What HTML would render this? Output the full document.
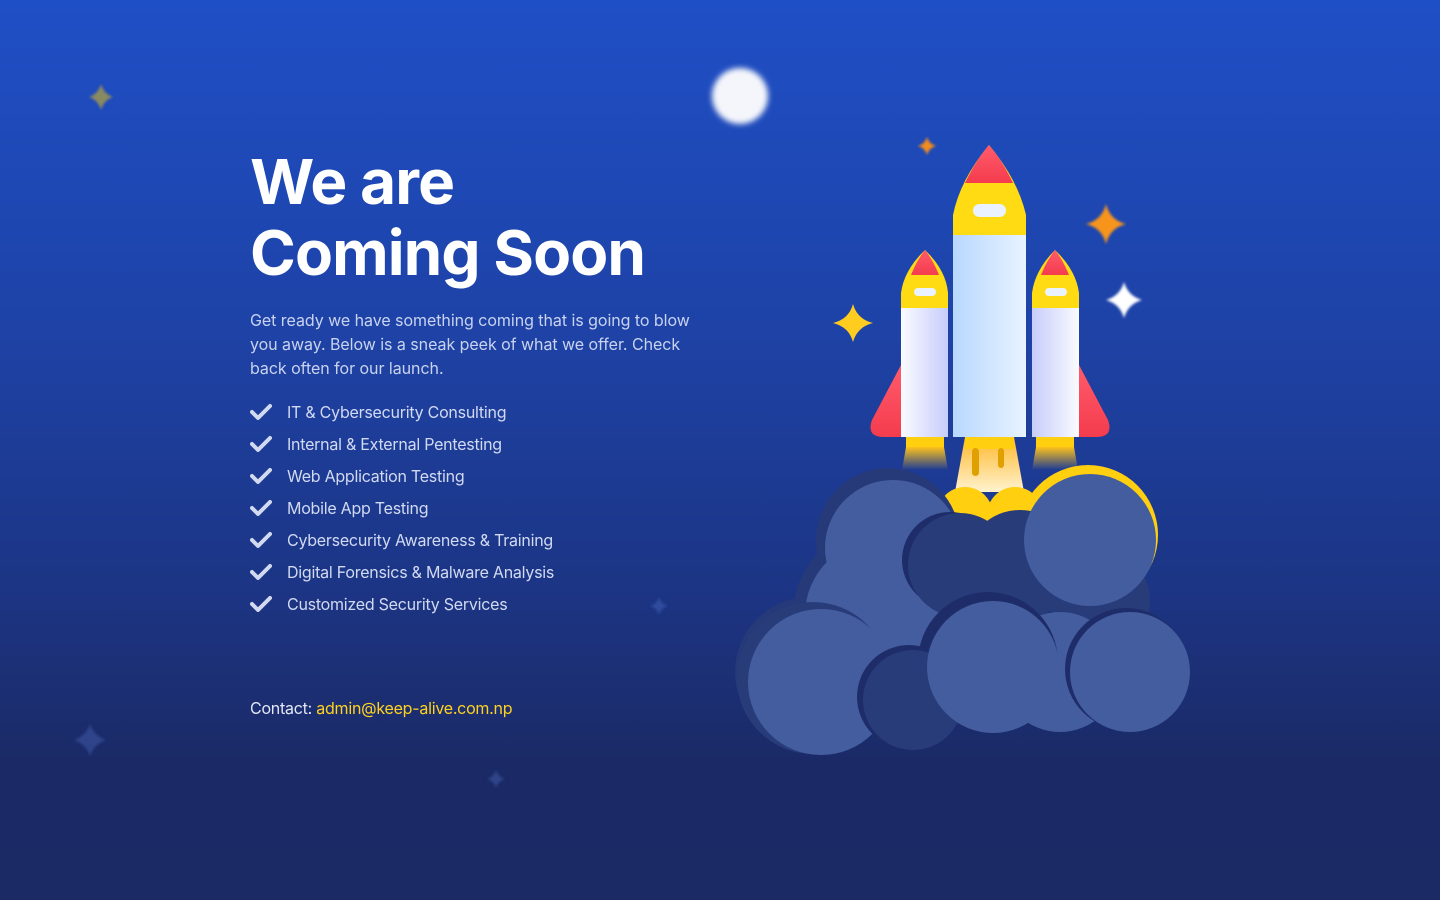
<!DOCTYPE html>
<html><head><meta charset="utf-8"><style>
html,body{margin:0;padding:0}
body{width:1440px;height:900px;overflow:hidden;position:relative;font-family:"Inter","Liberation Sans",sans-serif;background:linear-gradient(180deg,#1f4fc6 0%,#1e43a8 35%,#1c3585 65%,#1b2a66 85%,#1b2965 100%)}
h1{position:absolute;left:250px;top:146px;margin:0;color:#fff;font-size:62px;line-height:71px;font-weight:700;letter-spacing:-0.9px}
p{position:absolute;left:250px;top:308px;margin:0;width:460px;color:#c9d3ef;font-size:16px;line-height:24px;letter-spacing:-0.05px}
ul{position:absolute;left:250px;top:399px;margin:0;padding:0;list-style:none}
li{height:32px;line-height:26px;color:#d2daf2;font-size:16px;padding-left:37px;position:relative;letter-spacing:-0.25px}
li svg{position:absolute;left:0;top:4px}
.c{position:absolute;left:250px;top:698px;color:#e3e8f7;font-size:16px;letter-spacing:-0.25px}
.c span{color:#ffd21f}
svg.art{position:absolute;left:0;top:0}
</style></head><body>
<svg class="art" width="1440" height="900" viewBox="0 0 1440 900">
<defs>
<filter id="b"><feGaussianBlur stdDeviation="3"/></filter>
<filter id="b2"><feGaussianBlur stdDeviation="1.2"/></filter>
<linearGradient id="cb" x1="0" x2="1"><stop offset="0" stop-color="#b8d8ff"/><stop offset="1" stop-color="#e8f3ff"/></linearGradient>
<linearGradient id="sl" x1="0" x2="1"><stop offset="0" stop-color="#fafbff"/><stop offset="1" stop-color="#c7cdfb"/></linearGradient>
<linearGradient id="sr" x1="1" x2="0"><stop offset="0" stop-color="#fafbff"/><stop offset="1" stop-color="#c7cdfb"/></linearGradient>
<linearGradient id="fl" x1="0" y1="0" x2="0" y2="1"><stop offset="0" stop-color="#ffc21a"/><stop offset="1" stop-color="#ffc21a" stop-opacity="0"/></linearGradient>
<linearGradient id="fc" x1="0" y1="0" x2="0" y2="1"><stop offset="0" stop-color="#ffb72a"/><stop offset="1" stop-color="#fff3d0"/></linearGradient>
<linearGradient id="red" x1="0" y1="0" x2="0" y2="1"><stop offset="0" stop-color="#ff5b6b"/><stop offset="1" stop-color="#f43c4e"/></linearGradient>
</defs>
<circle cx="740" cy="96" r="28" fill="#f4f6fb" filter="url(#b)"/>
<g filter="url(#b2)">
<path d="M101 84 Q104 94 113 97 Q104 100 101 110 Q98 100 89 97 Q98 94 101 84Z" fill="#a59a4a" opacity=".8"/>
<path d="M90 724 Q94 736 106 740 Q94 744 90 756 Q86 744 74 740 Q86 736 90 724Z" fill="#3a55a0" opacity=".6"/>
<path d="M496 770 Q498 777 505 779 Q498 781 496 788 Q494 781 487 779 Q494 777 496 770Z" fill="#3a55a0" opacity=".6"/>
<path d="M659 597 Q661 604 668 606 Q661 608 659 615 Q657 608 650 606 Q657 604 659 597Z" fill="#3a5cb0" opacity=".6"/>
<path d="M927 137 Q929 144 936 146 Q929 148 927 155 Q925 148 918 146 Q925 144 927 137Z" fill="#f28c1c"/>
<path d="M1106 204 Q1110 220 1126 224 Q1110 228 1106 244 Q1102 228 1086 224 Q1102 220 1106 204Z" fill="#f7941d"/>
<path d="M1124 282 Q1128 296 1142 300 Q1128 304 1124 318 Q1120 304 1106 300 Q1120 296 1124 282Z" fill="#fff"/>
</g>
<path d="M853 304 Q857 319 873 323 Q857 327 853 342 Q849 327 833 323 Q849 319 853 304Z" fill="#ffcc1f"/>
<rect x="906" y="437" width="38" height="10" fill="#ffcf10"/>
<path d="M906 447 L944 447 L948 470 L902 470Z" fill="url(#fl)"/>
<rect x="1036" y="437" width="38" height="10" fill="#ffcf10"/>
<path d="M1036 447 L1074 447 L1078 470 L1032 470Z" fill="url(#fl)"/>
<path d="M965 437 L1014 437 L1024 492 L955 492Z" fill="url(#fc)"/>
<rect x="965" y="437" width="49" height="12" fill="#ffcf10"/>
<rect x="972" y="448" width="7" height="28" rx="3.5" fill="#e0a000"/>
<rect x="998" y="448" width="6" height="20" rx="3" fill="#e0a000"/>
<path d="M901 365 L872 420 Q866 437 884 437 L901 437Z" fill="url(#red)"/>
<path d="M1079 365 L1108 420 Q1114 437 1096 437 L1079 437Z" fill="url(#red)"/>
<path d="M901 308 L901 293 Q904 270 925 250 Q946 270 948 293 L948 308Z" fill="#ffdb14"/>
<path d="M911 275 Q917 260 925 250 Q933 260 939 275Z" fill="url(#red)"/>
<rect x="901" y="308" width="47" height="129" fill="url(#sl)"/>
<rect x="914" y="288" width="22" height="8" rx="4" fill="#eaf2ff"/>
<path d="M1032 308 L1032 293 Q1035 270 1055 250 Q1076 270 1079 293 L1079 308Z" fill="#ffdb14"/>
<path d="M1041 275 Q1047 260 1055 250 Q1063 260 1069 275Z" fill="url(#red)"/>
<rect x="1032" y="308" width="47" height="129" fill="url(#sr)"/>
<rect x="1045" y="288" width="22" height="8" rx="4" fill="#eaf2ff"/>
<path d="M953 235 L953 215 Q960 180 989 145 Q1018 180 1026 215 L1026 235Z" fill="#ffdb14"/>
<path d="M965 183 Q976 160 989 145 Q1002 160 1013 183Z" fill="url(#red)"/>
<rect x="953" y="235" width="73" height="202" fill="url(#cb)"/>
<rect x="973" y="204" width="33" height="13" rx="6.5" fill="#eaf2ff"/>
<circle cx="1088" cy="535" r="70" fill="#ffcf10"/>
<circle cx="965" cy="515" r="28" fill="#ffcf10"/>
<circle cx="1015" cy="515" r="28" fill="#ffcf10"/>
<g fill="#263a7a">
<circle cx="888" cy="540" r="72"/>
<circle cx="872" cy="610" r="78"/>
<circle cx="810" cy="672" r="75"/>
</g>
<g fill="#445d9e">
<circle cx="893" cy="548" r="68"/>
<circle cx="880" cy="615" r="75"/>
</g>
<circle cx="950" cy="560" r="48" fill="#1e2d6a"/>
<g fill="#283c7a">
<circle cx="960" cy="565" r="52"/>
<circle cx="1020" cy="565" r="55"/>
<circle cx="1100" cy="600" r="50"/>
</g>
<circle cx="1090" cy="540" r="66" fill="#445d9e"/>
<circle cx="1060" cy="672" r="60" fill="#445d9e"/>
<circle cx="988" cy="662" r="70" fill="#1e2d6a"/>
<circle cx="813" cy="678" r="76" fill="#283c7a"/>
<circle cx="821" cy="682" r="73" fill="#445d9e"/>
<circle cx="909" cy="697" r="52" fill="#1e2d6a"/>
<circle cx="913" cy="700" r="50" fill="#283c7a"/>
<circle cx="993" cy="667" r="66" fill="#445d9e"/>
<circle cx="1126" cy="669" r="61" fill="#1e2d6a"/>
<circle cx="1130" cy="672" r="60" fill="#445d9e"/>
</svg>
<h1>We are<br>Coming Soon</h1>
<p>Get ready we have something coming that is going to blow you away. Below is a sneak peek of what we offer. Check back often for our launch.</p>
<ul>
<li><svg width="22" height="18" viewBox="0 0 22 18"><path d="M2 9 L8 15 L20 3" fill="none" stroke="#d2daf2" stroke-width="4" stroke-linecap="round" stroke-linejoin="round"/></svg>IT &amp; Cybersecurity Consulting</li>
<li><svg width="22" height="18" viewBox="0 0 22 18"><path d="M2 9 L8 15 L20 3" fill="none" stroke="#d2daf2" stroke-width="4" stroke-linecap="round" stroke-linejoin="round"/></svg>Internal &amp; External Pentesting</li>
<li><svg width="22" height="18" viewBox="0 0 22 18"><path d="M2 9 L8 15 L20 3" fill="none" stroke="#d2daf2" stroke-width="4" stroke-linecap="round" stroke-linejoin="round"/></svg>Web Application Testing</li>
<li><svg width="22" height="18" viewBox="0 0 22 18"><path d="M2 9 L8 15 L20 3" fill="none" stroke="#d2daf2" stroke-width="4" stroke-linecap="round" stroke-linejoin="round"/></svg>Mobile App Testing</li>
<li><svg width="22" height="18" viewBox="0 0 22 18"><path d="M2 9 L8 15 L20 3" fill="none" stroke="#d2daf2" stroke-width="4" stroke-linecap="round" stroke-linejoin="round"/></svg>Cybersecurity Awareness &amp; Training</li>
<li><svg width="22" height="18" viewBox="0 0 22 18"><path d="M2 9 L8 15 L20 3" fill="none" stroke="#d2daf2" stroke-width="4" stroke-linecap="round" stroke-linejoin="round"/></svg>Digital Forensics &amp; Malware Analysis</li>
<li><svg width="22" height="18" viewBox="0 0 22 18"><path d="M2 9 L8 15 L20 3" fill="none" stroke="#d2daf2" stroke-width="4" stroke-linecap="round" stroke-linejoin="round"/></svg>Customized Security Services</li>
</ul>
<div class="c">Contact: <span>admin@keep-alive.com.np</span></div>
</body></html>
